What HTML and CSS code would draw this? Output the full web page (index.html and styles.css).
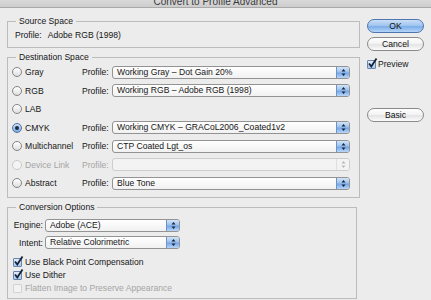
FILE: index.html
```html
<!DOCTYPE html>
<html lang="en">
<head>
    <meta charset="UTF-8">
    <title>Convert to Profile Advanced</title>
    <link rel="stylesheet" href="styles.css">
</head>
<body>
<div class="titlebar"><span>Convert to Profile Advanced</span></div>

<div class="dialog">
    <div class="main">
        <div class="group source">
            <div class="group-title">Source Space</div>
            <div class="source-row">Profile:<span class="source-name">Adobe RGB (1998)</span></div>
        </div>

        <div class="group dest">
            <div class="group-title">Destination Space</div>
            <div class="dest-row">
                <label class="radio-label"><span class="radio"></span>Gray</label>
                <span class="field-label">Profile:</span>
                <div class="select"><span class="select-text">Working Gray – Dot Gain 20%</span><span class="stepper"><svg width="7" height="11" viewBox="0 0 7 11"><path d="M1.5 4.5 L3.5 2 L5.5 4.5Z M1.5 6.5 L3.5 9 L5.5 6.5Z"/></svg></span></div>
            </div>
            <div class="dest-row">
                <label class="radio-label"><span class="radio"></span>RGB</label>
                <span class="field-label">Profile:</span>
                <div class="select"><span class="select-text">Working RGB – Adobe RGB (1998)</span><span class="stepper"><svg width="7" height="11" viewBox="0 0 7 11"><path d="M1.5 4.5 L3.5 2 L5.5 4.5Z M1.5 6.5 L3.5 9 L5.5 6.5Z"/></svg></span></div>
            </div>
            <div class="dest-row">
                <label class="radio-label"><span class="radio"></span>LAB</label>
            </div>
            <div class="dest-row">
                <label class="radio-label"><span class="radio checked"></span>CMYK</label>
                <span class="field-label">Profile:</span>
                <div class="select"><span class="select-text">Working CMYK – GRACoL2006_Coated1v2</span><span class="stepper"><svg width="7" height="11" viewBox="0 0 7 11"><path d="M1.5 4.5 L3.5 2 L5.5 4.5Z M1.5 6.5 L3.5 9 L5.5 6.5Z"/></svg></span></div>
            </div>
            <div class="dest-row">
                <label class="radio-label"><span class="radio"></span>Multichannel</label>
                <span class="field-label">Profile:</span>
                <div class="select"><span class="select-text">CTP Coated Lgt_os</span><span class="stepper"><svg width="7" height="11" viewBox="0 0 7 11"><path d="M1.5 4.5 L3.5 2 L5.5 4.5Z M1.5 6.5 L3.5 9 L5.5 6.5Z"/></svg></span></div>
            </div>
            <div class="dest-row disabled">
                <label class="radio-label"><span class="radio"></span>Device Link</label>
                <span class="field-label">Profile:</span>
                <div class="select"><span class="select-text"></span><span class="stepper"><svg width="7" height="11" viewBox="0 0 7 11"><path d="M1.5 4.5 L3.5 2 L5.5 4.5Z M1.5 6.5 L3.5 9 L5.5 6.5Z"/></svg></span></div>
            </div>
            <div class="dest-row">
                <label class="radio-label"><span class="radio"></span>Abstract</label>
                <span class="field-label">Profile:</span>
                <div class="select"><span class="select-text">Blue Tone</span><span class="stepper"><svg width="7" height="11" viewBox="0 0 7 11"><path d="M1.5 4.5 L3.5 2 L5.5 4.5Z M1.5 6.5 L3.5 9 L5.5 6.5Z"/></svg></span></div>
            </div>
        </div>

        <div class="group options">
            <div class="group-title">Conversion Options</div>
            <div class="option-grid">
                <span class="option-label">Engine:</span>
                <div class="select"><span class="select-text">Adobe (ACE)</span><span class="stepper"><svg width="7" height="11" viewBox="0 0 7 11"><path d="M1.5 4.5 L3.5 2 L5.5 4.5Z M1.5 6.5 L3.5 9 L5.5 6.5Z"/></svg></span></div>
                <span class="option-label">Intent:</span>
                <div class="select"><span class="select-text">Relative Colorimetric</span><span class="stepper"><svg width="7" height="11" viewBox="0 0 7 11"><path d="M1.5 4.5 L3.5 2 L5.5 4.5Z M1.5 6.5 L3.5 9 L5.5 6.5Z"/></svg></span></div>
            </div>
            <div class="checks">
                <label class="check-label"><span class="check checked"><svg width="11" height="11" viewBox="0 0 11 11"><path d="M2 5.5 L4.3 8.5 L9.5 0.5"/></svg></span>Use Black Point Compensation</label>
                <label class="check-label"><span class="check checked"><svg width="11" height="11" viewBox="0 0 11 11"><path d="M2 5.5 L4.3 8.5 L9.5 0.5"/></svg></span>Use Dither</label>
                <label class="check-label disabled"><span class="check"></span>Flatten Image to Preserve Appearance</label>
            </div>
        </div>
    </div>

    <div class="side">
        <button class="btn btn-default" type="button">OK</button>
        <button class="btn btn-cancel" type="button">Cancel</button>
        <label class="check-label preview"><span class="check checked"><svg width="11" height="11" viewBox="0 0 11 11"><path d="M2 5.5 L4.3 8.5 L9.5 0.5"/></svg></span>Preview</label>
        <button class="btn btn-basic" type="button">Basic</button>
    </div>
</div>
</body>
</html>
```

FILE: styles.css
```css
* {
    margin: 0;
    padding: 0;
    box-sizing: border-box;
}

body {
    width: 431px;
    height: 300px;
    overflow: hidden;
    background-color: #ececec;
    color: #161616;
    font-family: 'Liberation Sans', Arial, sans-serif;
    font-size: 8.6px;
}

.titlebar {
    height: 8px;
    overflow: hidden;
    text-align: center;
    background: linear-gradient(#d9d9d9, #cdcdcd);
    border-bottom: 1px solid #a9a9a9;
}

.titlebar span {
    display: block;
    margin-top: -3px;
    font-size: 10px;
    line-height: 10px;
    color: #3a3a3a;
}

.dialog {
    display: flex;
    padding-left: 7px;
}

.main {
    width: 353px;
    margin-top: 13px;
}

.side {
    width: 57px;
    margin-left: 7px;
    margin-top: 11px;
    display: flex;
    flex-direction: column;
}

/* group boxes */
.group {
    border: 1px solid #bcbcbc;
}

.group + .group {
    margin-top: 9px;
}

.group-title {
    width: fit-content;
    margin: -6px 0 0 8px;
    padding: 0 3px;
    line-height: 11px;
    background-color: #ececec;
}

.source-row {
    padding: 3px 0 6px 7px;
    line-height: 11px;
}

.source-name {
    margin-left: 6px;
}

.dest {
    padding-bottom: 4.5px;
}

.dest-row {
    height: 18.5px;
    padding-left: 4px;
    display: grid;
    grid-template-columns: 70px 30px 238px;
    align-items: center;
}

.radio-label {
    display: flex;
    align-items: center;
    gap: 3px;
}

.radio {
    width: 10px;
    height: 10px;
    border-radius: 50%;
    border: 1px solid #858585;
    background: linear-gradient(#ffffff, #dedede);
    display: flex;
    align-items: center;
    justify-content: center;
}

.radio.checked {
    border-color: #52729f;
    background: linear-gradient(#cfe0f6, #7aa9e3);
}

.radio.checked::after {
    content: "";
    width: 4px;
    height: 4px;
    border-radius: 50%;
    background-color: #1b2a44;
}

.field-label {
    white-space: nowrap;
}

/* popup menus */
.select {
    height: 13px;
    display: flex;
    border: 1px solid #939393;
    border-radius: 3px;
    background: linear-gradient(#ffffff, #f1f1f1);
    overflow: hidden;
}

.select-text {
    flex: 1;
    padding-left: 4px;
    line-height: 11px;
    white-space: nowrap;
    overflow: hidden;
}

.stepper {
    width: 13px;
    display: flex;
    align-items: center;
    justify-content: center;
    border-left: 1px solid #6f93c4;
    background: linear-gradient(#d3e4f8 0%, #9cc2ee 45%, #74a6e6 55%, #b8d6f7 100%);
}

.stepper svg path {
    fill: #17263d;
}

.disabled {
    color: #a5a5a5;
}

.disabled .radio {
    border-color: #cacaca;
    background: #f4f4f4;
}

.disabled .select {
    border-color: #cdcdcd;
    background: #f3f3f3;
}

.disabled .stepper {
    border-left-color: #dedede;
    background: #f3f3f3;
}

.disabled .stepper svg path {
    fill: #b9b9b9;
}

/* conversion options */
.options {
    margin-right: 3px;
    padding-bottom: 3.5px;
}

.option-grid {
    padding-top: 3.25px;
    display: grid;
    grid-template-columns: 35px 135px;
    grid-auto-rows: 17.5px;
    column-gap: 2px;
    align-items: center;
}

.option-label {
    text-align: right;
}

.checks {
    margin-top: 4.25px;
    padding-left: 5px;
}

.check-label {
    height: 13px;
    display: flex;
    align-items: center;
    gap: 3px;
}

.check {
    position: relative;
    width: 9px;
    height: 9px;
    border: 1px solid #8a8a8a;
    border-radius: 1px;
    background: linear-gradient(#ffffff, #e2e2e2);
}

.check.checked {
    border-color: #6a84aa;
    background: linear-gradient(#e2edfa, #a6c7ee);
}

.check svg {
    position: absolute;
    left: -1px;
    top: -3px;
}

.check svg path {
    fill: none;
    stroke: #15233a;
    stroke-width: 1.8;
}

.check-label.disabled .check {
    border-color: #d2d2d2;
    background: #f2f2f2;
}

/* buttons */
.btn {
    height: 14px;
    border-radius: 7px;
    border: 1px solid #8a8a8a;
    background: linear-gradient(#ffffff 0%, #f1f1f1 50%, #e4e4e4 55%, #fbfbfb 100%);
    font-family: inherit;
    font-size: 8.6px;
    color: #111;
    line-height: 12px;
}

.btn-default {
    border-color: #4f76ad;
    background: linear-gradient(#c9def7 0%, #9fc4ef 48%, #7cadea 55%, #b4d5f8 100%);
}

.btn-cancel {
    margin-top: 4px;
}

.preview {
    margin-top: 7px;
    height: 12px;
    gap: 2px;
}

.btn-basic {
    margin-top: 38px;
}
```
